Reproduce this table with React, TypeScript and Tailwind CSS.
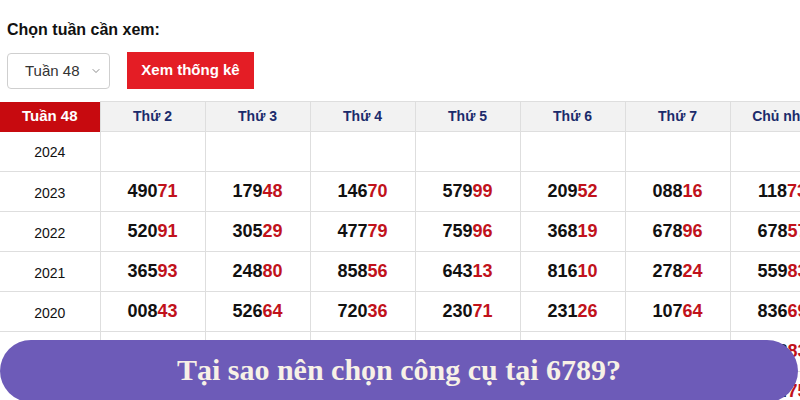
import { ChevronDown } from "lucide-react";

const days = ["Thứ 2", "Thứ 3", "Thứ 4", "Thứ 5", "Thứ 6", "Thứ 7", "Chủ nhật"];

const rows: { year: string; nums: string[] }[] = [
  { year: "2024", nums: ["", "", "", "", "", "", ""] },
  { year: "2023", nums: ["49071", "17948", "14670", "57999", "20952", "08816", "11873"] },
  { year: "2022", nums: ["52091", "30529", "47779", "75996", "36819", "67896", "67857"] },
  { year: "2021", nums: ["36593", "24880", "85856", "64313", "81610", "27824", "55983"] },
  { year: "2020", nums: ["00843", "52664", "72036", "23071", "23126", "10764", "83669"] },
  { year: "2019", nums: ["31207", "90418", "62235", "14782", "58340", "71659", "40383"] },
  { year: "2018", nums: ["85526", "47319", "29604", "63158", "02871", "96542", "19475"] },
];

export default function App() {
  return (
    <div
      className="relative h-[400px] w-[800px] overflow-hidden bg-white text-black"
      style={{ fontFamily: '"Liberation Sans", Arial, sans-serif' }}
    >
      {/* Week picker */}
      <div className="px-[7px] pt-[19px]">
        <div className="text-[16px] font-bold leading-[21px] text-[#111]">Chọn tuần cần xem:</div>
        <div className="mt-[13px] flex items-center gap-[17px]">
          <div className="flex h-[36px] w-[103px] items-center justify-between rounded-[4px] border border-[#cfcfcf] pl-[17px] pr-[7px]">
            <span className="text-[15px] text-[#333]">Tuần 48</span>
            <ChevronDown className="h-[12px] w-[12px] text-[#666]" strokeWidth={1.5} />
          </div>
          <button className="-mt-[2px] h-[37px] w-[127px] bg-[#e41d25] text-[15px] font-bold text-white">
            Xem thống kê
          </button>
        </div>
      </div>

      {/* Stats table */}
      <table className="mt-[12px] w-[835px] table-fixed border-collapse">
        <colgroup>
          <col className="w-[100px]" />
          {days.map((d) => (
            <col key={d} className="w-[105px]" />
          ))}
        </colgroup>
        <thead>
          <tr className="h-[30px]">
            <th className="bg-[#c70a0f] text-[15px] font-bold text-white">Tuần 48</th>
            {days.map((d) => (
              <th
                key={d}
                className="border border-[#dedede] bg-[#f2f2f2] text-[14px] font-bold text-[#1b2b6b]"
              >
                {d}
              </th>
            ))}
          </tr>
        </thead>
        <tbody>
          {rows.map((r) => (
            <tr key={r.year} className="h-[40px]">
              <td className="border-b border-[#dedede] pt-[3px] text-center text-[14px] text-[#111]">
                {r.year}
              </td>
              {r.nums.map((n, i) => (
                <td
                  key={i}
                  className="border border-[#dedede] text-center text-[18px] font-bold text-[#111]"
                >
                  {n.slice(0, 3)}
                  <span className="text-[#c1121b]">{n.slice(3)}</span>
                </td>
              ))}
            </tr>
          ))}
        </tbody>
      </table>

      {/* Banner */}
      <div className="absolute left-0 top-[340px] flex h-[62px] w-[798px] items-center justify-center rounded-full bg-[#6d5bb8] pb-[4px]">
        <span
          className="text-[30px] font-bold text-[#f7f1e6]"
          style={{ fontFamily: '"Liberation Serif", "DejaVu Serif", serif' }}
        >
          Tại sao nên chọn công cụ tại 6789?
        </span>
      </div>
    </div>
  );
}
